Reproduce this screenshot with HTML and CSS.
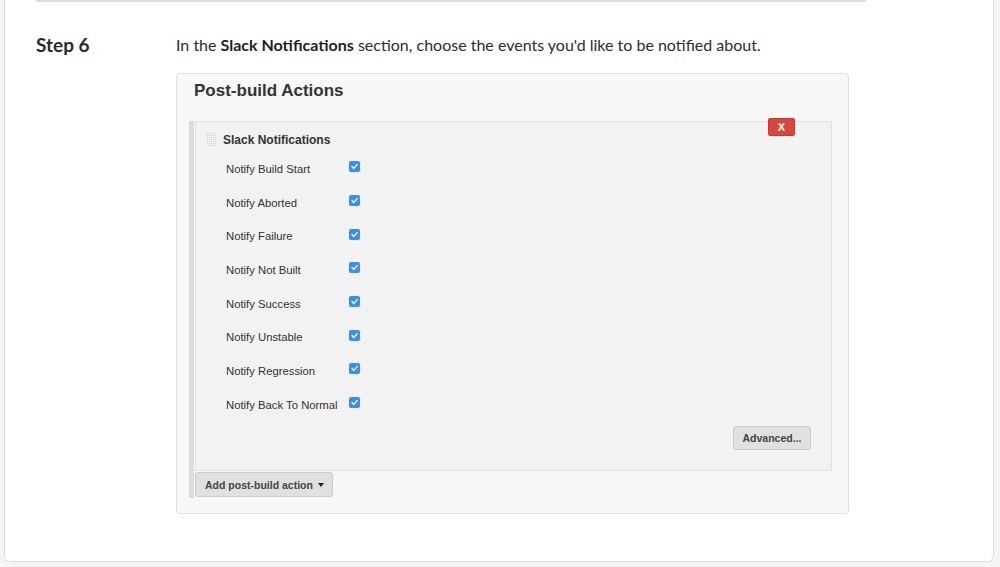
FILE: index.html
```html
<!DOCTYPE html>
<html>
<head>
<meta charset="utf-8">
<link rel="stylesheet" href="styles.css">
</head>
<body>
<div class="card">
  <div class="rule"></div>
  <div class="step">
    <div class="step-label">Step 6</div>
    <div class="step-body">
      <p class="desc">In the <b>Slack Notifications</b> section, choose the events you'd like to be notified about.</p>
      <div class="panel">
        <div class="panel-title">Post-build Actions</div>
        <div class="section">
          <div class="box">
            <span class="xbtn">X</span>
            <div class="box-head"><svg class="handle" width="10" height="14" viewBox="0 0 10 14"><defs><pattern id="dots" width="2" height="2" patternUnits="userSpaceOnUse"><rect width="1" height="1" fill="#cfcfcf"/></pattern></defs><rect width="10" height="14" fill="url(#dots)"/></svg><span class="box-title">Slack Notifications</span></div>
            <div class="rows">
              <div class="row"><span class="lbl">Notify Build Start</span><span class="cb"><svg viewBox="0 0 11 11" width="11" height="11"><path d="M3 5.6 L4.8 7.4 L8.2 3.6" fill="none" stroke="#fff" stroke-width="1.4" stroke-linecap="round" stroke-linejoin="round"/></svg></span></div>
              <div class="row"><span class="lbl">Notify Aborted</span><span class="cb"><svg viewBox="0 0 11 11" width="11" height="11"><path d="M3 5.6 L4.8 7.4 L8.2 3.6" fill="none" stroke="#fff" stroke-width="1.4" stroke-linecap="round" stroke-linejoin="round"/></svg></span></div>
              <div class="row"><span class="lbl">Notify Failure</span><span class="cb"><svg viewBox="0 0 11 11" width="11" height="11"><path d="M3 5.6 L4.8 7.4 L8.2 3.6" fill="none" stroke="#fff" stroke-width="1.4" stroke-linecap="round" stroke-linejoin="round"/></svg></span></div>
              <div class="row"><span class="lbl">Notify Not Built</span><span class="cb"><svg viewBox="0 0 11 11" width="11" height="11"><path d="M3 5.6 L4.8 7.4 L8.2 3.6" fill="none" stroke="#fff" stroke-width="1.4" stroke-linecap="round" stroke-linejoin="round"/></svg></span></div>
              <div class="row"><span class="lbl">Notify Success</span><span class="cb"><svg viewBox="0 0 11 11" width="11" height="11"><path d="M3 5.6 L4.8 7.4 L8.2 3.6" fill="none" stroke="#fff" stroke-width="1.4" stroke-linecap="round" stroke-linejoin="round"/></svg></span></div>
              <div class="row"><span class="lbl">Notify Unstable</span><span class="cb"><svg viewBox="0 0 11 11" width="11" height="11"><path d="M3 5.6 L4.8 7.4 L8.2 3.6" fill="none" stroke="#fff" stroke-width="1.4" stroke-linecap="round" stroke-linejoin="round"/></svg></span></div>
              <div class="row"><span class="lbl">Notify Regression</span><span class="cb"><svg viewBox="0 0 11 11" width="11" height="11"><path d="M3 5.6 L4.8 7.4 L8.2 3.6" fill="none" stroke="#fff" stroke-width="1.4" stroke-linecap="round" stroke-linejoin="round"/></svg></span></div>
              <div class="row"><span class="lbl">Notify Back To Normal</span><span class="cb"><svg viewBox="0 0 11 11" width="11" height="11"><path d="M3 5.6 L4.8 7.4 L8.2 3.6" fill="none" stroke="#fff" stroke-width="1.4" stroke-linecap="round" stroke-linejoin="round"/></svg></span></div>
            </div>
            <div class="adv-wrap"><span class="btn adv">Advanced...</span></div>
          </div>
          <div class="add-wrap"><span class="btn add">Add post-build action <span class="caret"></span></span></div>
        </div>
      </div>
    </div>
  </div>
</div>
</body>
</html>
```
FILE: styles.css
```css
html, body { margin: 0; padding: 0; }
body {
  background: #f4f4f4;
  width: 1000px;
  height: 567px;
  overflow: hidden;
  font-family: "Liberation Sans", Arial, sans-serif;
}
.card {
  margin: 0 6px 0 4px;
  height: 562px;
  background: #fff;
  border: 1px solid #dcdcdc;
  border-top: none;
  border-radius: 0 0 6px 6px;
  padding: 0 0 0 31px;
  box-sizing: border-box;
}
.rule {
  width: 830px;
  height: 2px;
  background: #dedede;
}
.step {
  display: flex;
  margin-top: 32px;
}
.step-label {
  width: 140px;
  flex: none;
  font-family: Lato, sans-serif;
  font-weight: 700;
  font-size: 19px;
  line-height: 22px;
  color: #2a2a2a;
}
.step-body { width: 673px; }
.desc {
  margin: 0;
  font-family: Lato, sans-serif;
  font-size: 16px;
  line-height: 22px;
  color: #2d2d2d;
}
.desc b { font-weight: 700; color: #1f1f1f; }
.panel {
  margin-top: 17px;
  background: #f8f8f8;
  border: 1px solid #dfdfdf;
  border-radius: 4px;
  height: 441px;
  box-sizing: border-box;
  padding: 0 16px 0 12px;
}
.panel-title {
  font-weight: 700;
  font-size: 17px;
  color: #333;
  padding: 7px 0 0 5px;
  height: 47px;
  box-sizing: border-box;
}
.section {
  border-left: 5px solid #dcdcdc;
  width: 638px;
  padding-bottom: 1px;
}
.box {
  position: relative;
  margin-left: 1px;
  background: #f2f2f2;
  border: 1px solid #e0e0e0;
  height: 350px;
  box-sizing: border-box;
  padding: 10px 0 0 11px;
}
.xbtn {
  position: absolute;
  top: -4px;
  right: 36px;
  width: 27px;
  height: 18px;
  background: #d9473c;
  border: 1px solid #c63a30;
  border-radius: 2px;
  box-sizing: border-box;
  color: #fff;
  font-weight: 700;
  font-size: 11px;
  line-height: 16px;
  text-align: center;
}
.box-head {
  display: flex;
  align-items: center;
  gap: 6px;
  height: 16px;
}
.handle { display: block; flex: none; }
.box-title {
  font-weight: 700;
  font-size: 12px;
  color: #333;
}
.rows {
  margin-top: 8px;
  padding-left: 19px;
}
.row {
  display: grid;
  grid-template-columns: 123px 11px;
  align-items: center;
  height: 33.7px;
}
.row:first-child { margin-top: -5px; }
.lbl {
  font-size: 11.3px;
  color: #333;
  padding-top: 2px;
  white-space: nowrap;
}
.cb {
  width: 11px;
  height: 11px;
  border-radius: 2px;
  background: #3a8ef2;
  display: block;
  margin-top: -2px;
}
.cb svg { display: block; }
.adv-wrap {
  display: flex;
  justify-content: flex-end;
  padding-right: 20px;
  margin-top: 5px;
}
.btn {
  display: inline-flex;
  align-items: center;
  background: #e0e0e0;
  border: 1px solid #cbcbcb;
  border-radius: 3px;
  box-sizing: border-box;
  font-weight: 700;
  font-size: 10.5px;
  color: #444;
  white-space: nowrap;
}
.adv {
  width: 78px;
  height: 24px;
  justify-content: center;
}
.add-wrap { padding: 1px 0 0 1px; }
.add {
  width: 138px;
  height: 25px;
  padding-left: 9px;
  gap: 4px;
}
.caret {
  width: 0;
  height: 0;
  border-left: 3.5px solid transparent;
  border-right: 3.5px solid transparent;
  border-top: 4px solid #222;
  margin-left: 1px;
}
```
